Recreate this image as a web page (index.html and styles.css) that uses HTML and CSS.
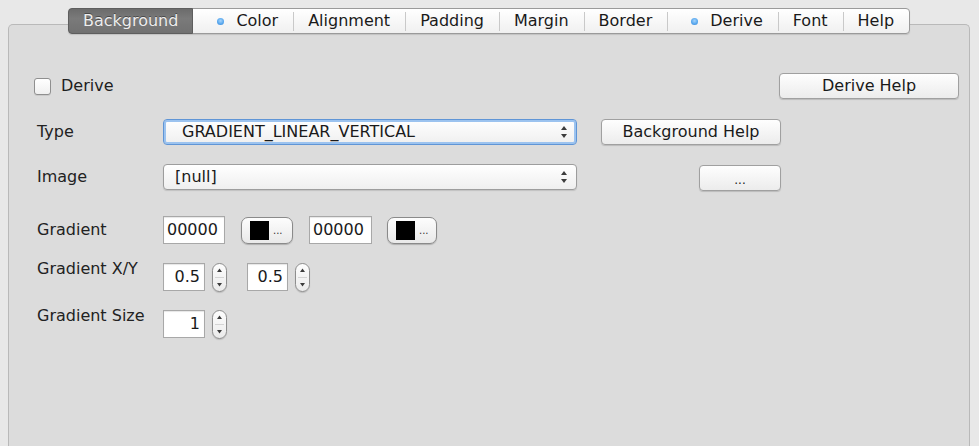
FILE: index.html
```html
<!DOCTYPE html>
<html>
<head>
<meta charset="utf-8">
<link rel="stylesheet" href="styles.css">
</head>
<body>
<div class="window">
  <div class="tabs">
    <div class="tab selected">Background</div>
    <div class="tab dotted"><span class="dot"></span>Color</div>
    <div class="tab">Alignment</div>
    <div class="tab">Padding</div>
    <div class="tab">Margin</div>
    <div class="tab">Border</div>
    <div class="tab dotted"><span class="dot"></span>Derive</div>
    <div class="tab">Font</div>
    <div class="tab">Help</div>
  </div>
  <div class="panel">
    <div class="row row-derive">
      <div class="check"><span class="box"></span>Derive</div>
      <div class="btn btn-wide">Derive Help</div>
    </div>
    <div class="row row-type">
      <span class="label">Type</span>
      <div class="combo focused">
        <span class="combo-text">GRADIENT_LINEAR_VERTICAL</span>
        <svg class="arrows" width="6" height="14" viewBox="0 0 6 14"><path d="M0 5 L3 1 L6 5 Z M0 9 L3 13 L6 9 Z" fill="#3c3c3c"/></svg>
      </div>
      <div class="side"><div class="btn btn-wide">Background Help</div></div>
    </div>
    <div class="row row-image">
      <span class="label">Image</span>
      <div class="combo">
        <span class="combo-text">[null]</span>
        <svg class="arrows" width="6" height="14" viewBox="0 0 6 14"><path d="M0 5 L3 1 L6 5 Z M0 9 L3 13 L6 9 Z" fill="#3c3c3c"/></svg>
      </div>
      <div class="side"><div class="btn btn-dots"><span class="dots-text">...</span></div></div>
    </div>
    <div class="row row-gradient">
      <span class="label">Gradient</span>
      <div class="field hex">00000</div>
      <div class="color-btn"><span class="swatch"></span><span class="mini">...</span></div>
      <div class="field hex hex2">00000</div>
      <div class="color-btn color-btn2"><span class="swatch"></span><span class="mini">...</span></div>
    </div>
    <div class="row row-spin row-xy">
      <span class="label label-top">Gradient X/Y</span>
      <div class="field num">0.5</div>
      <div class="spin"><svg width="13" height="27" viewBox="0 0 13 27"><path d="M4 8 L6.5 4.5 L9 8 Z M4 19 L6.5 22.5 L9 19 Z" fill="#3c3c3c"/><line x1="2" y1="13.5" x2="11" y2="13.5" stroke="#d4d4d4" stroke-width="1"/></svg></div>
      <div class="field num num2">0.5</div>
      <div class="spin"><svg width="13" height="27" viewBox="0 0 13 27"><path d="M4 8 L6.5 4.5 L9 8 Z M4 19 L6.5 22.5 L9 19 Z" fill="#3c3c3c"/><line x1="2" y1="13.5" x2="11" y2="13.5" stroke="#d4d4d4" stroke-width="1"/></svg></div>
    </div>
    <div class="row row-spin row-size">
      <span class="label label-top">Gradient Size</span>
      <div class="field num">1</div>
      <div class="spin"><svg width="13" height="27" viewBox="0 0 13 27"><path d="M4 8 L6.5 4.5 L9 8 Z M4 19 L6.5 22.5 L9 19 Z" fill="#3c3c3c"/><line x1="2" y1="13.5" x2="11" y2="13.5" stroke="#d4d4d4" stroke-width="1"/></svg></div>
    </div>
  </div>
</div>
</body>
</html>
```

FILE: styles.css
```css
html, body {
  margin: 0;
  padding: 0;
}
body {
  background: #e8e8e8;
  font-family: "DejaVu Sans", "Liberation Sans", sans-serif;
  font-size: 16px;
  line-height: 18px;
  color: #1e1e1e;
  height: 446px;
  overflow: hidden;
}
.window {
  margin: 0 9px 0 8px;
  padding-top: 8px;
}

/* Tabs */
.tabs {
  display: flex;
  width: max-content;
  margin: 0 auto;
  height: 26px;
  box-sizing: border-box;
  border: 1px solid #9a9a9a;
  border-radius: 4px;
  background: linear-gradient(#ffffff, #f0f0f0);
  box-shadow: 0 1px 1px rgba(0, 0, 0, 0.12);
  position: relative;
  z-index: 1;
}
.tab {
  display: flex;
  align-items: center;
  padding: 0 15px;
  position: relative;
  color: #1a1a1a;
  white-space: nowrap;
}
.tab + .tab::before {
  content: "";
  position: absolute;
  left: 0;
  top: 3px;
  bottom: 2px;
  width: 1px;
  background: #c9c9c9;
}
.selected + .tab::before {
  display: none;
}
.tab.selected {
  margin: -1px 0 -1px -1px;
  padding: 0 14px 0 14px;
  border-radius: 4px 0 0 4px;
  background: linear-gradient(#6c6c6c, #7a7a7a 40%, #717171);
  border: 1px solid #5e5e5e;
  color: #ededed;
  text-shadow: 0 -1px 0 #4a4a4a;
}
.tab.dotted {
  padding-left: 24px;
}
.dot {
  width: 7px;
  height: 7px;
  border-radius: 50%;
  background: radial-gradient(circle at 50% 40%, #a6d4fb 0, #5aa9ef 55%, #2f7fd2 100%);
  margin-right: 12px;
  flex: none;
}

/* Panel */
.panel {
  margin-top: -10px;
  height: 422px;
  box-sizing: border-box;
  background: #dcdcdc;
  border: 1px solid #b9b9b9;
  border-bottom: none;
  border-radius: 5px 5px 0 0;
  padding: 48px 10px 0 28px;
}
.row {
  display: flex;
  align-items: center;
}
.label {
  width: 126px;
  flex: none;
  color: #222;
}
.label-top {
  align-self: flex-start;
  margin-top: -2px;
}
.row-derive {
  height: 26px;
  justify-content: space-between;
}
.check {
  display: flex;
  align-items: center;
  margin-left: -3px;
}
.box {
  width: 17px;
  height: 17px;
  box-sizing: border-box;
  border: 1px solid #8f8f8f;
  border-radius: 3px;
  background: linear-gradient(#ffffff, #f0f0f0);
  box-shadow: 0 1px 0 rgba(0, 0, 0, 0.08);
  margin-right: 10px;
}
.btn {
  display: flex;
  align-items: center;
  justify-content: center;
  height: 26px;
  box-sizing: border-box;
  border: 1px solid #a0a0a0;
  border-radius: 4px;
  background: linear-gradient(#fefefe, #ececec);
  box-shadow: 0 1px 1px rgba(0, 0, 0, 0.15);
  color: #1a1a1a;
}
.btn-wide {
  width: 180px;
}
.btn-dots {
  width: 82px;
  margin-top: 1px;
}
.dots-text {
  font-size: 12px;
  margin-top: 4px;
}

.row-type {
  margin-top: 20px;
  height: 26px;
}
.row-image {
  margin-top: 19px;
  height: 26px;
}
.combo {
  width: 414px;
  height: 26px;
  box-sizing: border-box;
  display: flex;
  align-items: center;
  justify-content: space-between;
  padding: 0 9px 0 11px;
  border: 1px solid #9d9d9d;
  border-radius: 4px;
  background: linear-gradient(#ffffff, #efefef);
  box-shadow: 0 1px 1px rgba(0, 0, 0, 0.12);
}
.combo.focused {
  border-color: #5f95d6;
  box-shadow: inset 0 0 0 2px #9cc3ef;
  padding-left: 18px;
}
.combo-text {
  color: #1a1a1a;
}
.side {
  width: 180px;
  margin-left: 24px;
  display: flex;
  justify-content: flex-end;
}

/* Gradient row */
.row-gradient {
  margin-top: 25px;
  height: 30px;
}
.field {
  height: 28px;
  box-sizing: border-box;
  display: flex;
  align-items: center;
  padding: 0 3px;
  border: 1px solid #a8a8a8;
  background: #ffffff;
  box-shadow: inset 0 1px 1px rgba(0, 0, 0, 0.1);
  color: #1a1a1a;
}
.hex {
  width: 62px;
}
.hex2 {
  width: 63px;
  margin-left: 16px;
}
.color-btn {
  width: 52px;
  height: 27px;
  box-sizing: border-box;
  margin-left: 16px;
  display: flex;
  align-items: center;
  padding-left: 8px;
  border: 1px solid #8a8a8a;
  border-radius: 7px;
  background: linear-gradient(#fdfdfd, #e9e9e9);
  box-shadow: 0 1px 1px rgba(0, 0, 0, 0.2);
}
.color-btn2 {
  width: 50px;
  margin-left: 15px;
}
.swatch {
  width: 19px;
  height: 19px;
  background: #000;
  flex: none;
}
.mini {
  font-size: 10px;
  margin-left: 4px;
  margin-top: 2px;
  color: #333;
}

/* Spinner rows */
.row-spin {
  height: 30px;
  margin-top: 17px;
}
.num {
  width: 42px;
  justify-content: flex-end;
  padding-right: 4px;
}
.num2 {
  width: 41px;
  margin-left: 20px;
}
.spin {
  width: 15px;
  height: 29px;
  box-sizing: border-box;
  margin-left: 7px;
  border: 1px solid #8e8e8e;
  border-radius: 8px;
  background: linear-gradient(#fdfdfd, #ebebeb);
  box-shadow: 0 1px 1px rgba(0, 0, 0, 0.15);
  display: flex;
}
.spin svg {
  display: block;
}
.row-size {
  margin-top: 17px;
}
```
